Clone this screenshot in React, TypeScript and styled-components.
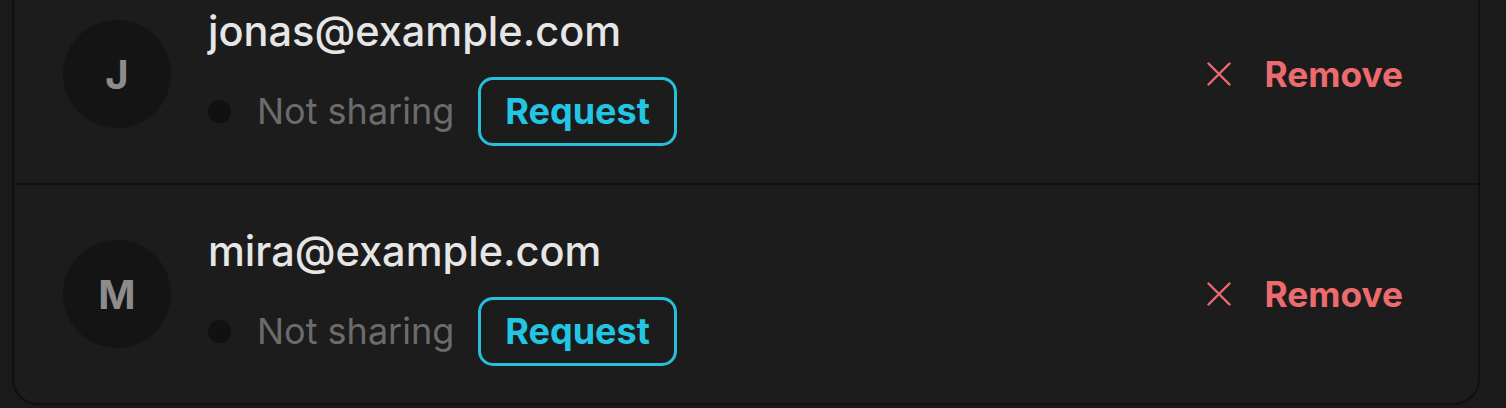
import React from "react";
import styled, { createGlobalStyle } from "styled-components";

const Global = createGlobalStyle`
  html, body {
    margin: 0;
    padding: 0;
    background: #1a1a1a;
    overflow: hidden;
  }
  body {
    font-family: Inter, "Noto Sans", sans-serif;
  }
`;

const Page = styled.div`
  padding: 0 26px 0 12px;
  height: 408px;
  overflow: hidden;
`;

const Panel = styled.div`
  margin-top: -37px;
  background: #1c1c1c;
  border: 2px solid #101010;
  border-radius: 26px;
  display: flex;
  flex-direction: column;
`;

const Row = styled.div<{ $last?: boolean }>`
  display: flex;
  align-items: center;
  height: 218px;
  padding: 0 75px 0 49px;
  border-bottom: ${(p) => (p.$last ? "none" : "2px solid #111")};
`;

const Avatar = styled.div`
  width: 108px;
  height: 108px;
  border-radius: 50%;
  background: #141414;
  color: #8c8c8c;
  font-size: 40px;
  font-weight: 700;
  display: flex;
  align-items: center;
  justify-content: center;
  flex-shrink: 0;
`;

const Info = styled.div`
  margin-left: 37px;
  margin-top: 4px;
  display: flex;
  flex-direction: column;
  gap: 22px;
  flex: 1;
`;

const Email = styled.div`
  color: #e6e6e6;
  font-size: 41.5px;
  font-weight: 500;
  line-height: 48px;
`;

const Status = styled.div`
  display: flex;
  align-items: center;
`;

const Dot = styled.span`
  width: 23px;
  height: 23px;
  border-radius: 50%;
  background: #111;
  margin-right: 26px;
`;

const StatusText = styled.span`
  color: #6b6b6b;
  font-size: 36px;
  margin-right: 24px;
`;

const RequestButton = styled.button`
  background: transparent;
  border: 3px solid #26bfdc;
  border-radius: 15px;
  color: #22c6e2;
  font-family: inherit;
  font-size: 36px;
  font-weight: 700;
  padding: 0 24px;
  height: 69px;
`;

const RemoveButton = styled.button`
  background: transparent;
  border: none;
  display: flex;
  align-items: center;
  gap: 33px;
  color: #ec6b6e;
  font-family: inherit;
  font-size: 35.3px;
  font-weight: 700;
  padding: 0;
`;

const XIcon = () => (
  <svg width="24" height="24" viewBox="0 0 24 24" fill="none">
    <path d="M1.5 1.5 L22.5 22.5 M22.5 1.5 L1.5 22.5" stroke="#ec6b6e" strokeWidth="2.4" strokeLinecap="round" />
  </svg>
);

const members = [
  { email: "jonas@example.com", initial: "J" },
  { email: "mira@example.com", initial: "M" },
];

export default function App() {
  return (
    <>
      <Global />
      <Page>
        <Panel>
          {members.map((m, i) => (
            <Row key={m.email} $last={i === members.length - 1}>
              <Avatar>{m.initial}</Avatar>
              <Info>
                <Email>{m.email}</Email>
                <Status>
                  <Dot />
                  <StatusText>Not sharing</StatusText>
                  <RequestButton>Request</RequestButton>
                </Status>
              </Info>
              <RemoveButton>
                <XIcon />
                Remove
              </RemoveButton>
            </Row>
          ))}
        </Panel>
      </Page>
    </>
  );
}
